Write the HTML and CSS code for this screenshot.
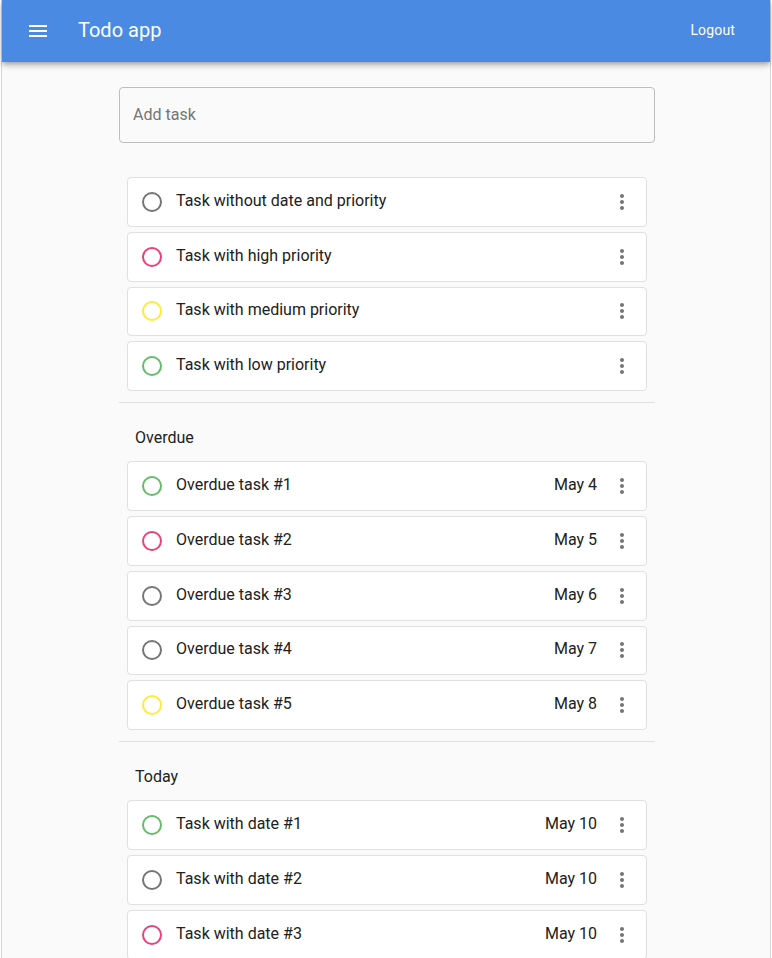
FILE: index.html
```html
<!DOCTYPE html>
<html>
<head>
<meta charset="utf-8">
<link rel="stylesheet" href="styles.css">
</head>
<body>
<div class="frame">
  <header class="appbar">
    <button class="icon-btn" aria-label="menu">
      <svg width="24" height="24" viewBox="0 0 24 24"><path fill="#fff" d="M3 18h18v-2H3v2zm0-5h18v-2H3v2zm0-7v2h18V6H3z"/></svg>
    </button>
    <h1 class="title">Todo app</h1>
    <button class="logout">Logout</button>
  </header>
  <main class="content">
    <div class="add-task"><span class="placeholder">Add task</span></div>

    <ul class="list first">
      <li class="task"><span class="check gray"></span><span class="name">Task without date and priority</span><span class="date"></span><span class="more"><svg width="24" height="24" viewBox="0 0 24 24"><path fill="#757575" d="M12 8c1.1 0 2-.9 2-2s-.9-2-2-2-2 .9-2 2 .9 2 2 2zm0 2c-1.1 0-2 .9-2 2s.9 2 2 2 2-.9 2-2-.9-2-2-2zm0 6c-1.1 0-2 .9-2 2s.9 2 2 2 2-.9 2-2-.9-2-2-2z"/></svg></span></li>
      <li class="task"><span class="check pink"></span><span class="name">Task with high priority</span><span class="date"></span><span class="more"><svg width="24" height="24" viewBox="0 0 24 24"><path fill="#757575" d="M12 8c1.1 0 2-.9 2-2s-.9-2-2-2-2 .9-2 2 .9 2 2 2zm0 2c-1.1 0-2 .9-2 2s.9 2 2 2 2-.9 2-2-.9-2-2-2zm0 6c-1.1 0-2 .9-2 2s.9 2 2 2 2-.9 2-2-.9-2-2-2z"/></svg></span></li>
      <li class="task"><span class="check yellow"></span><span class="name">Task with medium priority</span><span class="date"></span><span class="more"><svg width="24" height="24" viewBox="0 0 24 24"><path fill="#757575" d="M12 8c1.1 0 2-.9 2-2s-.9-2-2-2-2 .9-2 2 .9 2 2 2zm0 2c-1.1 0-2 .9-2 2s.9 2 2 2 2-.9 2-2-.9-2-2-2zm0 6c-1.1 0-2 .9-2 2s.9 2 2 2 2-.9 2-2-.9-2-2-2z"/></svg></span></li>
      <li class="task"><span class="check green"></span><span class="name">Task with low priority</span><span class="date"></span><span class="more"><svg width="24" height="24" viewBox="0 0 24 24"><path fill="#757575" d="M12 8c1.1 0 2-.9 2-2s-.9-2-2-2-2 .9-2 2 .9 2 2 2zm0 2c-1.1 0-2 .9-2 2s.9 2 2 2 2-.9 2-2-.9-2-2-2zm0 6c-1.1 0-2 .9-2 2s.9 2 2 2 2-.9 2-2-.9-2-2-2z"/></svg></span></li>
    </ul>

    <hr class="divider">
    <h2 class="section">Overdue</h2>
    <ul class="list">
      <li class="task"><span class="check green"></span><span class="name">Overdue task #1</span><span class="date">May 4</span><span class="more"><svg width="24" height="24" viewBox="0 0 24 24"><path fill="#757575" d="M12 8c1.1 0 2-.9 2-2s-.9-2-2-2-2 .9-2 2 .9 2 2 2zm0 2c-1.1 0-2 .9-2 2s.9 2 2 2 2-.9 2-2-.9-2-2-2zm0 6c-1.1 0-2 .9-2 2s.9 2 2 2 2-.9 2-2-.9-2-2-2z"/></svg></span></li>
      <li class="task"><span class="check pink"></span><span class="name">Overdue task #2</span><span class="date">May 5</span><span class="more"><svg width="24" height="24" viewBox="0 0 24 24"><path fill="#757575" d="M12 8c1.1 0 2-.9 2-2s-.9-2-2-2-2 .9-2 2 .9 2 2 2zm0 2c-1.1 0-2 .9-2 2s.9 2 2 2 2-.9 2-2-.9-2-2-2zm0 6c-1.1 0-2 .9-2 2s.9 2 2 2 2-.9 2-2-.9-2-2-2z"/></svg></span></li>
      <li class="task"><span class="check gray"></span><span class="name">Overdue task #3</span><span class="date">May 6</span><span class="more"><svg width="24" height="24" viewBox="0 0 24 24"><path fill="#757575" d="M12 8c1.1 0 2-.9 2-2s-.9-2-2-2-2 .9-2 2 .9 2 2 2zm0 2c-1.1 0-2 .9-2 2s.9 2 2 2 2-.9 2-2-.9-2-2-2zm0 6c-1.1 0-2 .9-2 2s.9 2 2 2 2-.9 2-2-.9-2-2-2z"/></svg></span></li>
      <li class="task"><span class="check gray"></span><span class="name">Overdue task #4</span><span class="date">May 7</span><span class="more"><svg width="24" height="24" viewBox="0 0 24 24"><path fill="#757575" d="M12 8c1.1 0 2-.9 2-2s-.9-2-2-2-2 .9-2 2 .9 2 2 2zm0 2c-1.1 0-2 .9-2 2s.9 2 2 2 2-.9 2-2-.9-2-2-2zm0 6c-1.1 0-2 .9-2 2s.9 2 2 2 2-.9 2-2-.9-2-2-2z"/></svg></span></li>
      <li class="task"><span class="check yellow"></span><span class="name">Overdue task #5</span><span class="date">May 8</span><span class="more"><svg width="24" height="24" viewBox="0 0 24 24"><path fill="#757575" d="M12 8c1.1 0 2-.9 2-2s-.9-2-2-2-2 .9-2 2 .9 2 2 2zm0 2c-1.1 0-2 .9-2 2s.9 2 2 2 2-.9 2-2-.9-2-2-2zm0 6c-1.1 0-2 .9-2 2s.9 2 2 2 2-.9 2-2-.9-2-2-2z"/></svg></span></li>
    </ul>

    <hr class="divider">
    <h2 class="section">Today</h2>
    <ul class="list">
      <li class="task"><span class="check green"></span><span class="name">Task with date #1</span><span class="date">May 10</span><span class="more"><svg width="24" height="24" viewBox="0 0 24 24"><path fill="#757575" d="M12 8c1.1 0 2-.9 2-2s-.9-2-2-2-2 .9-2 2 .9 2 2 2zm0 2c-1.1 0-2 .9-2 2s.9 2 2 2 2-.9 2-2-.9-2-2-2zm0 6c-1.1 0-2 .9-2 2s.9 2 2 2 2-.9 2-2-.9-2-2-2z"/></svg></span></li>
      <li class="task"><span class="check gray"></span><span class="name">Task with date #2</span><span class="date">May 10</span><span class="more"><svg width="24" height="24" viewBox="0 0 24 24"><path fill="#757575" d="M12 8c1.1 0 2-.9 2-2s-.9-2-2-2-2 .9-2 2 .9 2 2 2zm0 2c-1.1 0-2 .9-2 2s.9 2 2 2 2-.9 2-2-.9-2-2-2zm0 6c-1.1 0-2 .9-2 2s.9 2 2 2 2-.9 2-2-.9-2-2-2z"/></svg></span></li>
      <li class="task"><span class="check pink"></span><span class="name">Task with date #3</span><span class="date">May 10</span><span class="more"><svg width="24" height="24" viewBox="0 0 24 24"><path fill="#757575" d="M12 8c1.1 0 2-.9 2-2s-.9-2-2-2-2 .9-2 2 .9 2 2 2zm0 2c-1.1 0-2 .9-2 2s.9 2 2 2 2-.9 2-2-.9-2-2-2zm0 6c-1.1 0-2 .9-2 2s.9 2 2 2 2-.9 2-2-.9-2-2-2z"/></svg></span></li>
    </ul>
  </main>
</div>
</body>
</html>
```
FILE: styles.css
```css
* { box-sizing: border-box; }
html, body { margin: 0; padding: 0; height: 100%; }
body {
  background: #fff;
  font-family: Roboto, "Liberation Sans", Arial, sans-serif;
  color: #212121;
  overflow: hidden;
}
.frame {
  margin: 0 1px;
  min-height: 100%;
  background: #fafafa;
  border-left: 1px solid #d6d6d6;
  border-right: 1px solid #d6d6d6;
}
.appbar {
  height: 62px;
  background: #4a8ae2;
  display: flex;
  align-items: center;
  padding: 0 21px 0 24px;
  box-shadow: 0 2px 4px -1px rgba(0,0,0,.2), 0 4px 5px 0 rgba(0,0,0,.14), 0 1px 10px 0 rgba(0,0,0,.12);
  position: relative;
}
.icon-btn {
  background: none;
  border: 0;
  padding: 0;
  width: 24px;
  height: 24px;
  display: flex;
}
.title {
  margin: 0 0 0 28px;
  font-size: 20px;
  font-weight: 400;
  color: #fff;
  flex: 1;
  padding-bottom: 2px;
}
.logout {
  background: none;
  border: 0;
  color: #fff;
  font-family: inherit;
  font-size: 14px;
  padding: 8px 14px 10px;
  letter-spacing: .15px;
}
.content {
  width: 538px;
  margin: 0 auto;
  padding-top: 25px;
  padding-left: 2px;
}
.add-task {
  height: 56px;
  border: 1px solid #bdbdbd;
  border-radius: 4px;
  display: flex;
  align-items: center;
  padding: 0 0 2px 13px;
}
.placeholder { font-size: 16px; color: #757575; }
.list {
  list-style: none;
  margin: 0;
  padding: 0 8px;
  display: flex;
  flex-direction: column;
  gap: 5px;
}
.list.first { margin-top: 34px; }
.task {
  height: 49.8px;
  background: #fff;
  border: 1px solid #e0e0e0;
  border-radius: 4px;
  display: flex;
  align-items: center;
  padding: 0 12px 0 14px;
}
.check {
  width: 20px;
  height: 20px;
  border-radius: 50%;
  border: 2px solid #757575;
  flex: none;
}
.check.gray { border-color: #757575; }
.check.pink { border-color: #ec407a; }
.check.yellow { border-color: #ffeb3b; }
.check.green { border-color: #66bb6a; }
.name { flex: 1; margin-left: 14px; font-size: 16px; color: #212121; padding-bottom: 3px; }
.date { font-size: 16px; color: #212121; margin-right: 13px; padding-bottom: 3px; }
.more { width: 24px; height: 24px; display: flex; }
.divider {
  border: 0;
  border-top: 1px solid #e0e0e0;
  margin: 11px 0 0;
}
.section {
  margin: 0;
  font-size: 16px;
  font-weight: 400;
  line-height: 24px;
  padding: 23px 16px 11px;
}
```
